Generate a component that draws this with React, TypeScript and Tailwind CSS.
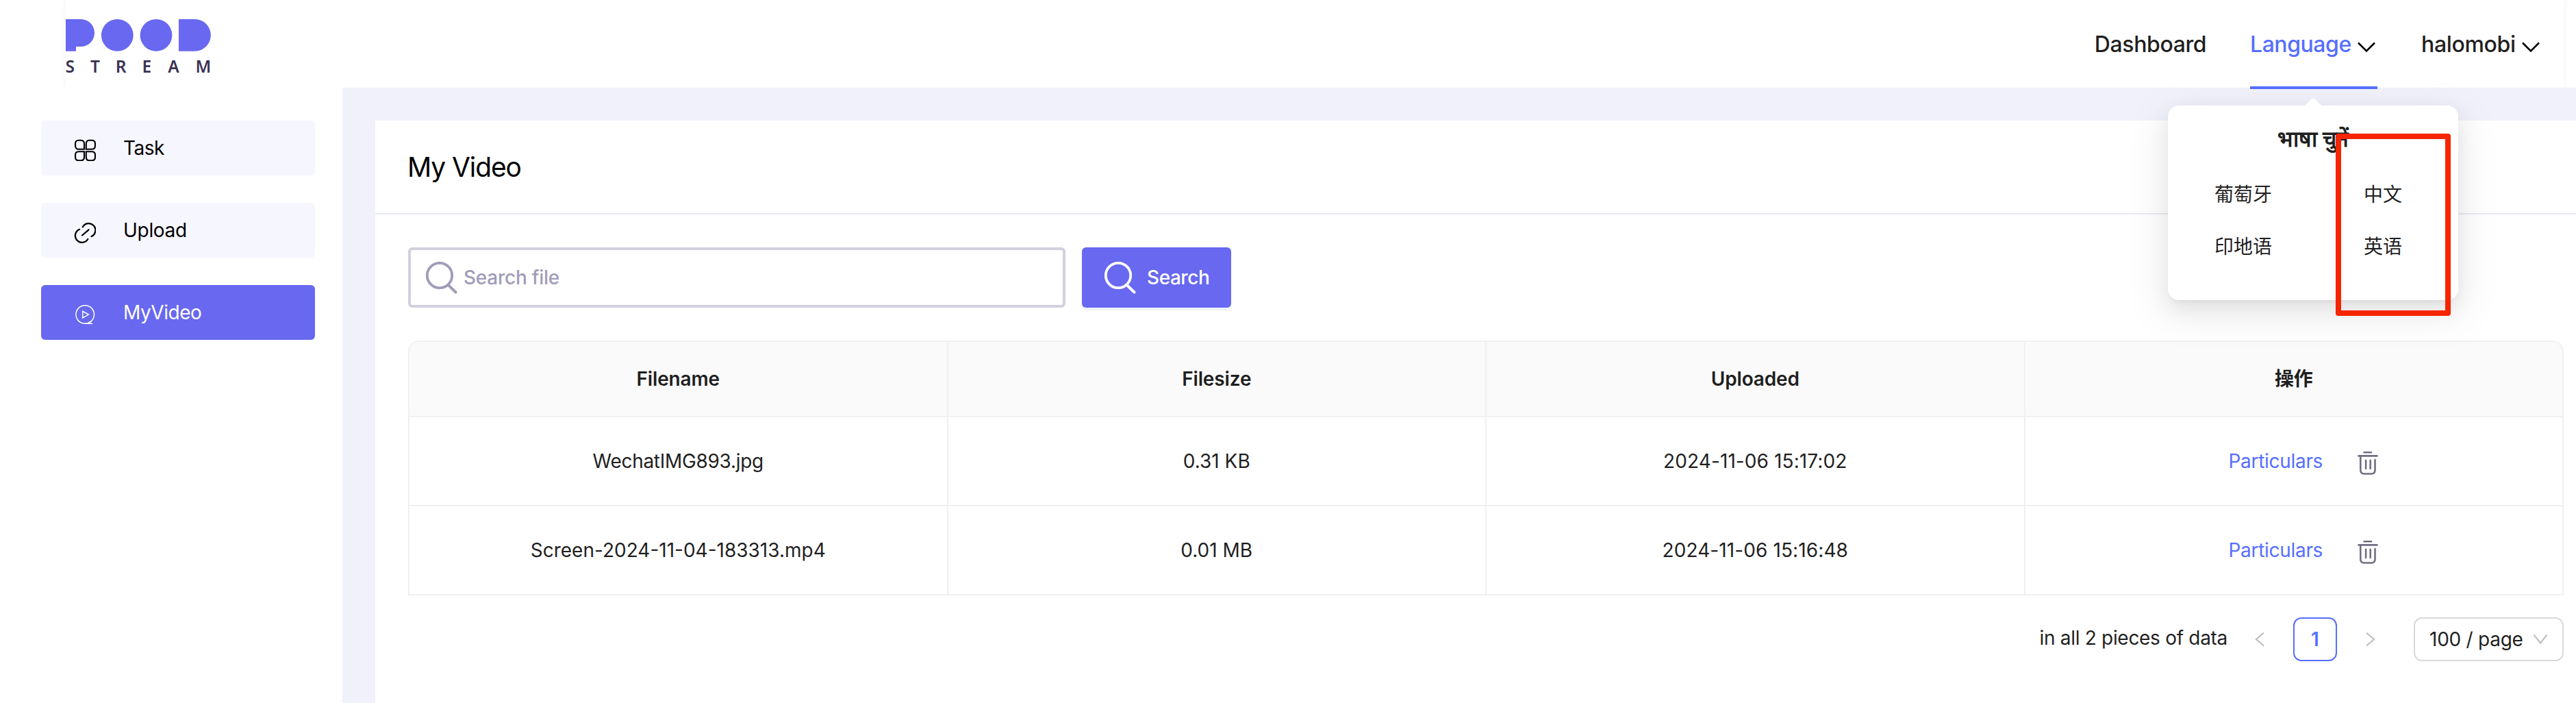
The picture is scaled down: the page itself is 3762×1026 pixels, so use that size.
import React from "react";

const files = [
  { name: "WechatIMG893.jpg", track: "tracking-[-0.3px]", size: "0.31 KB", uploaded: "2024-11-06 15:17:02" },
  { name: "Screen-2024-11-04-183313.mp4", track: "", size: "0.01 MB", uploaded: "2024-11-06 15:16:48" },
];

function Logo() {
  return (
    <svg width="218" height="84" viewBox="94 26 218 84" className="-ml-0.5 block overflow-visible">
      <g fill="#6868f0">
        <path d="M96 28H118a20 20 0 0 1 0 40H111V74.700H96Z" />
        <circle cx="171.300" cy="51.400" r="23.400" />
        <circle cx="228" cy="51.400" r="23.400" />
        <path d="M261 28H284.500a23.350 23.350 0 0 1 0 46.700H261Z" />
      </g>
      <text
        x="95.5 132 168.8 207.5 245.3 285.5"
        y="106.3"
        fill="#3a3354"
        fontSize="24.5"
        fontWeight="600"
        fontFamily="'Noto Sans', sans-serif"
      >
        STREAM
      </text>
    </svg>
  );
}

function TaskIcon() {
  return (
    <svg width="32" height="32" viewBox="0 0 32 32" fill="none" stroke="#000" strokeWidth="2.1">
      <path d="M7 1.700h3q5 0 5 5v8h-8q-5 0-5-5v-3q0-5 5-5Z" />
      <path d="M22.500 1.700h3.500q5 0 5 5v3q0 5-5 5h-8.200v-8q0-5 4.700-5Z" />
      <path d="M7 18.300h8v8q0 5-5 5h-3q-5 0-5-5v-3q0-5 5-5Z" />
      <path d="M17.800 18.300h8.200q5 0 5 5v3q0 5-5 5h-3.500q-4.700 0-4.700-5Z" />
    </svg>
  );
}

function LinkIcon() {
  return (
    <svg width="32" height="32" viewBox="0 0 32 32" fill="none" stroke="#000" strokeWidth="2.3" strokeLinecap="round">
      <path d="M12.800 8.200A9.900 9.900 0 1 1 25.500 22" />
      <path d="M8 11.800A9.900 9.900 0 1 0 20.300 26" />
      <path d="M12 20.500 21.500 12.300" />
    </svg>
  );
}

function PlayIcon() {
  return (
    <svg width="32" height="32" viewBox="0 0 32 32" fill="none" stroke="#fff" strokeWidth="1.5">
      <circle cx="16.200" cy="16" r="13.300" />
      <path d="M12.800 11.300v9.600l8.500-4.800Z" />
      <path d="M16 29.300H27M20 28.800l5-2.600" />
    </svg>
  );
}

function SearchIcon({ color }: { color: string }) {
  return (
    <svg width="48" height="48" viewBox="0 0 48 48" fill="none" stroke={color} className="shrink-0">
      <circle cx="22" cy="21" r="18.200" strokeWidth="3.800" />
      <path d="M35.200 35.500 45.500 45.500" strokeWidth="4" strokeLinecap="round" />
    </svg>
  );
}

function TrashIcon() {
  return (
    <svg width="32" height="36" viewBox="0 0 32 36" fill="none" stroke="#716d85" strokeWidth="2.600" strokeLinecap="round" className="relative top-[2px]">
      <path d="M10.500 3.300h10.500M2.500 8.400h27M5.300 9v20q0 5.500 5.500 5.500h10.200q5.500 0 5.500-5.500V14M13.100 14.800v12.200M19.700 14.800v12.200" />
    </svg>
  );
}

function Chevron() {
  return (
    <svg width="30" height="18" viewBox="0 0 30 18" fill="none" stroke="#000" strokeWidth="2.500" className="relative top-[3px] mr-px ml-auto">
      <path d="M3 3.500 15 15.500 27 3.500" />
    </svg>
  );
}

export default function App() {
  const item = "flex h-20 items-center rounded-md pl-12 text-[28px]";
  return (
    <div className="relative flex h-[1026px] w-[3762px] flex-col overflow-hidden bg-white font-['Inter','Noto_Sans_CJK_SC',sans-serif] text-[#1f1f1f]">
      <header className="h-32 shrink-0 overflow-hidden pr-[18px] pl-24">
        <div className="flex h-32 items-start justify-between pr-8 shadow-[0_0_10px_rgba(0,0,0,0.05)]">
          <div className="pt-[26px]">
            <Logo />
          </div>
          <nav className="flex h-32 gap-16 text-[32px] font-medium">
            <a className="flex w-[163px] items-center justify-center whitespace-nowrap pt-px tracking-[-0.4px]">Dashboard</a>
            <a className="relative flex w-[186px] items-center whitespace-nowrap pt-px text-[#566eff]">
              <span className="tracking-[-0.45px]">Language</span>
              <Chevron />
              <span className="absolute top-[126px] left-0 h-1 w-full bg-[#566eff]" />
            </a>
            <a className="flex w-[176px] items-center whitespace-nowrap pt-px">
              <span className="tracking-[-0.35px]">halomobi</span>
              <Chevron />
            </a>
          </nav>
        </div>
      </header>

      <div className="flex flex-1">
        <aside className="flex w-[500px] shrink-0 flex-col gap-10 pt-12 pr-10 pl-[60px] text-black">
          <div className={`${item} bg-[#f6f6ff]`}>
            <span className="relative top-[3px] flex w-[72px]"><TaskIcon /></span>
            <span className="tracking-[-0.5px]">Task</span>
          </div>
          <div className={`${item} bg-[#f6f6ff]`}>
            <span className="relative top-[3px] flex w-[72px]"><LinkIcon /></span>
            <span className="tracking-[-0.3px]">Upload</span>
          </div>
          <div className={`${item} bg-[#6868f0] text-white`}>
            <span className="relative top-[3px] flex w-[72px]"><PlayIcon /></span>
            <span className="tracking-[-0.45px]">MyVideo</span>
          </div>
        </aside>

        <main className="relative flex-1 bg-[#f1f1fb] pt-12 pl-12">
          <section className="h-[850px] bg-white">
            <h1 className="flex h-[137px] items-center border-b-2 border-[#e9e9f2] pt-0.5 pl-[47px] text-[39px] tracking-[-1.1px] text-black">
              My Video
            </h1>
            <div className="pt-12 pr-[18px] pl-12">
              <div className="flex h-[88px] gap-6 text-[28px]">
                <div className="flex w-[960px] items-center rounded-md border-4 border-[#d2d0df] pl-5 text-[#a09cb8]">
                  <SearchIcon color="#a09cb8" />
                  <span className="ml-[9px] font-medium tracking-[-0.25px]">Search file</span>
                </div>
                <button className="flex w-[218px] items-center rounded-md bg-[#6868f0] pl-[31px] text-white shadow-[0_4px_0_#eff3ff]">
                  <SearchIcon color="#ffffff" />
                  <span className="ml-4 font-medium tracking-[-0.45px]">Search</span>
                </button>
              </div>

              <div className="mt-12 w-[3148px] overflow-hidden rounded-t-2xl border-t-2 border-l-2 border-[#f0f0f0] text-[28px]">
                <div className="grid h-[110px] grid-cols-4 rounded-tr-2xl bg-[#fafafa] font-semibold">
                  {["Filename", "Filesize", "Uploaded", "操作"].map((title) => (
                    <div key={title} className="flex items-center justify-center border-r-2 border-b-2 border-[#f0f0f0] tracking-[-0.15px] last:rounded-tr-2xl">
                      {title}
                    </div>
                  ))}
                </div>
                {files.map((file) => (
                  <div key={file.name} className="grid h-[130px] grid-cols-4">
                    <div className={`flex items-center justify-center border-r-2 border-b-2 border-[#f0f0f0] ${file.track}`}>{file.name}</div>
                    <div className="flex items-center justify-center border-r-2 border-b-2 border-[#f0f0f0]">{file.size}</div>
                    <div className="flex items-center justify-center border-r-2 border-b-2 border-[#f0f0f0] tracking-[0.1px]">{file.uploaded}</div>
                    <div className="flex items-center border-r-2 border-b-2 border-[#f0f0f0] pl-[297px]">
                      <a className="w-[187px] tracking-[-0.3px] text-[#566eff]">Particulars</a>
                      <TrashIcon />
                    </div>
                  </div>
                ))}
              </div>

              <div className="mt-8 flex h-16 items-center justify-end text-[28px]">
                <span className="relative -top-0.5 mr-10 tracking-[-0.3px]">in all 2 pieces of data</span>
                <svg width="14" height="22" viewBox="0 0 14 22" fill="none" stroke="#bfbfbf" strokeWidth="2.200">
                  <path d="M13 1.500 2 11 13 20.500" />
                </svg>
                <span className="mr-[42px] ml-[42px] flex h-16 w-16 items-center justify-center rounded-xl border-2 border-[#566eff] font-semibold text-[#566eff]">
                  1
                </span>
                <svg width="14" height="22" viewBox="0 0 14 22" fill="none" stroke="#bfbfbf" strokeWidth="2.200">
                  <path d="M1 1.500 12 11 1 20.500" />
                </svg>
                <div className="ml-14 flex h-16 w-[219px] items-center justify-between rounded-xl border-2 border-[#d9d9d9] pr-[21px] pl-[21px]">
                  <span className="tracking-[-0.25px]">100 / page</span>
                  <svg width="22" height="16" viewBox="0 0 22 16" fill="none" stroke="#bfbfbf" strokeWidth="2.200">
                    <path d="M1.500 1.500 11 13.500 20.500 1.500" />
                  </svg>
                </div>
              </div>
            </div>
          </section>
          <div className="absolute -top-0.5 left-[2786px] h-1 w-[186px] bg-[#566eff]" />
        </main>
      </div>

      <div className="absolute top-[154px] left-[3166px] h-[284px] w-[424px] rounded-2xl bg-white text-[28px] shadow-[0_12px_32px_0_rgba(0,0,0,0.08),0_6px_12px_-8px_rgba(0,0,0,0.12),0_18px_56px_16px_rgba(0,0,0,0.05)]">
        <svg width="32" height="13" viewBox="0 0 32 13" fill="#fff" className="absolute -top-[11px] left-[196px]">
          <path d="M0 12Q4 11.500 6 9L13.500 1.500Q16 -0.800 18.500 1.500L26 9Q28 11.500 32 12V13H0Z" />
        </svg>
        <div className="flex flex-col items-center pt-6">
          <div className="flex h-[50px] items-center text-[32px] font-bold whitespace-nowrap">भाषा चुनें</div>
        </div>
        <div className="grid grid-cols-[218px_1fr] gap-y-8 pt-[34px] pl-[68px] leading-[44px]">
          <span>葡萄牙</span>
          <span>中文</span>
          <span>印地语</span>
          <span>英语</span>
        </div>
      </div>

      <div className="absolute top-[195px] left-[3411px] h-[266px] w-[168px] rounded border-8 border-[#f52500]" />
    </div>
  );
}
